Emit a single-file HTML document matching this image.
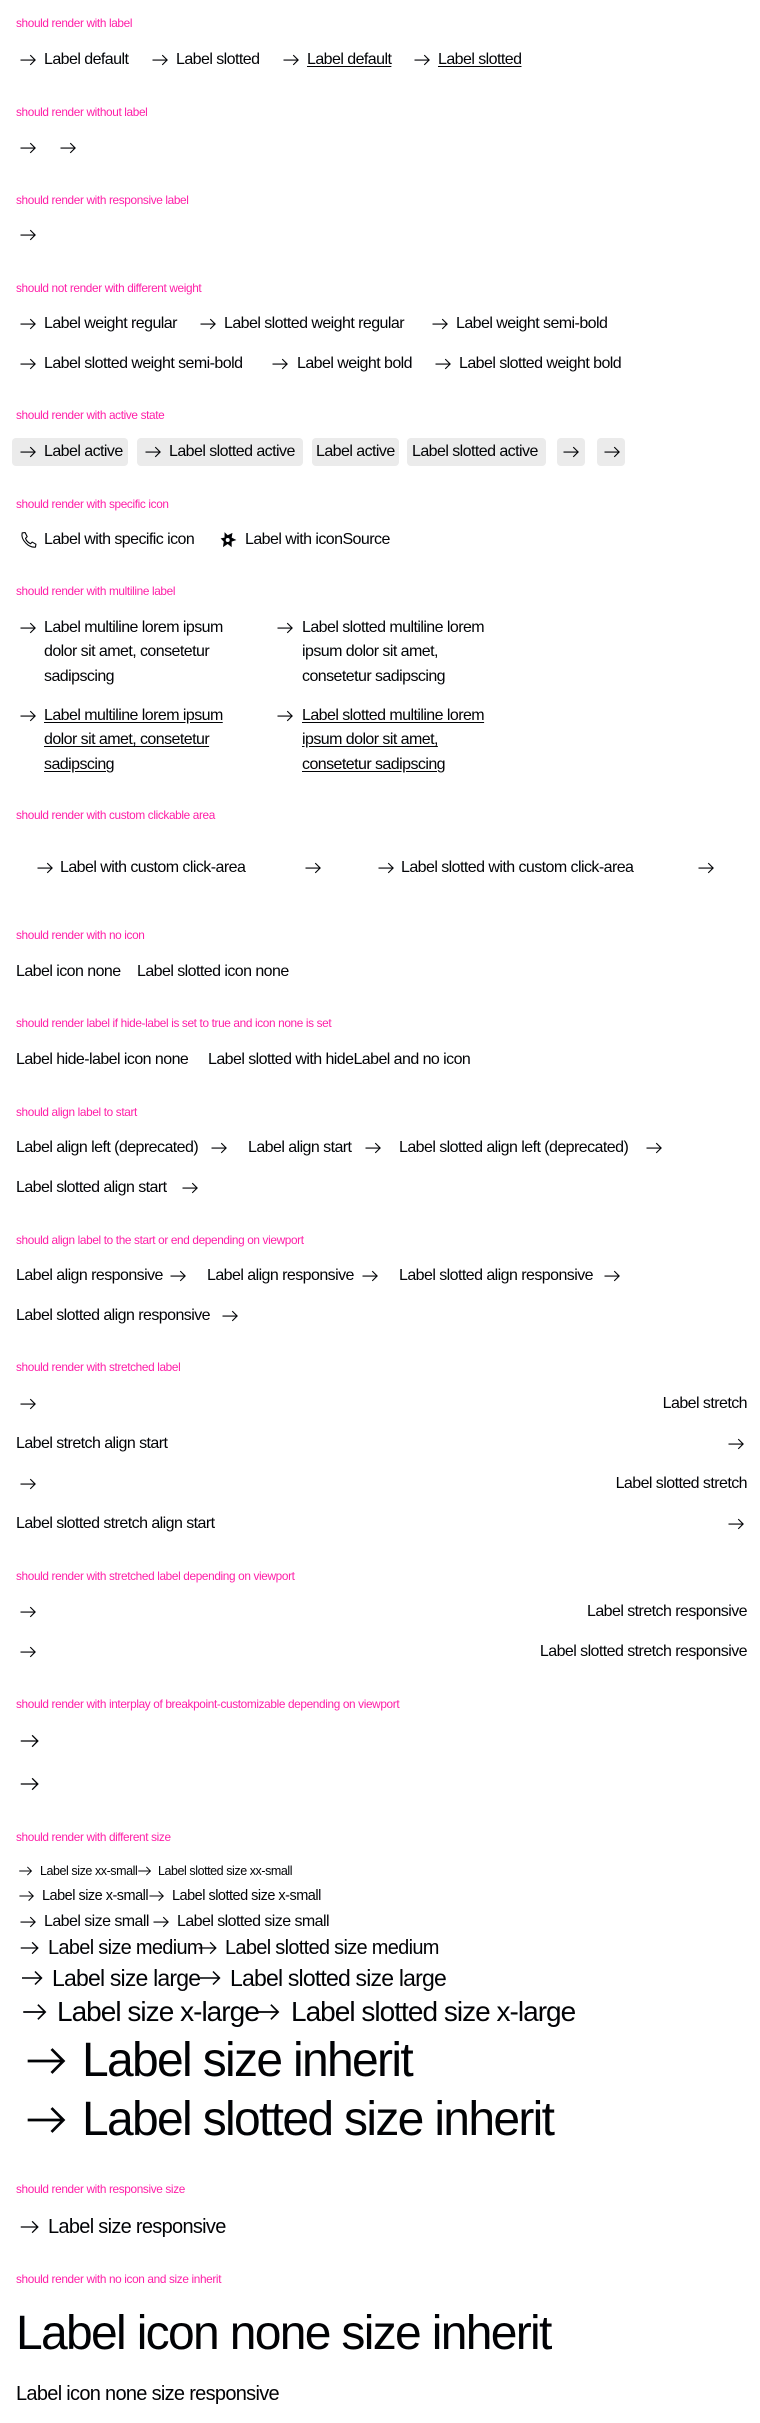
<!DOCTYPE html>
<html><head><meta charset="utf-8"><style>
html,body{margin:0;padding:0;background:#fff;}
body{position:relative;width:760px;height:2423px;overflow:hidden;font-family:"Liberation Sans",sans-serif;color:#010205;}
.h{position:absolute;left:16px;font-size:11.8px;line-height:14px;color:#ff1fa8;letter-spacing:-0.03em;transform:translateY(-50%);white-space:nowrap;}
.t{position:absolute;font-size:16px;line-height:24px;letter-spacing:-0.035em;transform:translateY(-50%);white-space:nowrap;}
.u{text-decoration:underline;text-underline-offset:2px;}
.a{position:absolute;width:18px;height:18px;transform:translateY(-50%);}
.b{position:absolute;top:438px;height:28px;background:#ebebeb;border-radius:4px;}
.r{right:13px;}
</style></head><body>
<svg width="0" height="0" style="position:absolute"><defs><symbol id="ar" viewBox="0 0 24 24"><path d="M2 12H21.5M15 5.5L21.5 12L15 18.5" fill="none" stroke="#010205" stroke-width="1.5"/></symbol></defs></svg>

<div class="h" style="top:23px">should render with label</div>
<svg class="a" style="left:19px;top:60px"><use href="#ar"/></svg><div class="t" style="left:44px;top:60px">Label default</div>
<svg class="a" style="left:151px;top:60px"><use href="#ar"/></svg><div class="t" style="left:176px;top:60px">Label slotted</div>
<svg class="a" style="left:282px;top:60px"><use href="#ar"/></svg><div class="t u" style="left:307px;top:60px">Label default</div>
<svg class="a" style="left:413px;top:60px"><use href="#ar"/></svg><div class="t u" style="left:438px;top:60px">Label slotted</div>

<div class="h" style="top:112px">should render without label</div>
<svg class="a" style="left:19px;top:148px"><use href="#ar"/></svg>
<svg class="a" style="left:59px;top:148px"><use href="#ar"/></svg>

<div class="h" style="top:200px">should render with responsive label</div>
<svg class="a" style="left:19px;top:235px"><use href="#ar"/></svg>

<div class="h" style="top:288px">should not render with different weight</div>
<svg class="a" style="left:19px;top:324px"><use href="#ar"/></svg><div class="t" style="left:44px;top:324px">Label weight regular</div>
<svg class="a" style="left:199px;top:324px"><use href="#ar"/></svg><div class="t" style="left:224px;top:324px">Label slotted weight regular</div>
<svg class="a" style="left:431px;top:324px"><use href="#ar"/></svg><div class="t" style="left:456px;top:324px">Label weight semi-bold</div>
<svg class="a" style="left:19px;top:364px"><use href="#ar"/></svg><div class="t" style="left:44px;top:364px">Label slotted weight semi-bold</div>
<svg class="a" style="left:271px;top:364px"><use href="#ar"/></svg><div class="t" style="left:297px;top:364px">Label weight bold</div>
<svg class="a" style="left:434px;top:364px"><use href="#ar"/></svg><div class="t" style="left:459px;top:364px">Label slotted weight bold</div>

<div class="h" style="top:415px">should render with active state</div>
<div class="b" style="left:12px;width:116px"></div>
<div class="b" style="left:137px;width:166px"></div>
<div class="b" style="left:312px;width:87px"></div>
<div class="b" style="left:407px;width:139px"></div>
<div class="b" style="left:557px;width:28px"></div>
<div class="b" style="left:597px;width:28px"></div>
<svg class="a" style="left:19px;top:452px"><use href="#ar"/></svg><div class="t" style="left:44px;top:452px">Label active</div>
<svg class="a" style="left:144px;top:452px"><use href="#ar"/></svg><div class="t" style="left:169px;top:452px">Label slotted active</div>
<div class="t" style="left:316px;top:452px">Label active</div>
<div class="t" style="left:412px;top:452px">Label slotted active</div>
<svg class="a" style="left:562px;top:452px"><use href="#ar"/></svg>
<svg class="a" style="left:603px;top:452px"><use href="#ar"/></svg>

<div class="h" style="top:504px">should render with specific icon</div>
<svg class="a" style="left:18px;top:540px;width:20px;height:20px" viewBox="0 0 24 24"><path d="M5 3.5L8.5 3L11 8L9 10C10 13 12 15 15 16.5L17 14.5L21.5 17L21 20.5C13 21.5 3 12 5 3.5Z" fill="none" stroke="#010205" stroke-width="1.3" stroke-linejoin="round"/></svg>
<div class="t" style="left:44px;top:540px">Label with specific icon</div>
<svg class="a" style="left:219px;top:540px;width:19px;height:19px" viewBox="0 0 24 24"><path d="M7 2L11 6L17 3L16 9L22 12L16 14L16 21L11 17L5 21L6 14L2 10L7 9Z" fill="#010205"/><circle cx="11" cy="12" r="2.5" fill="#fff"/></svg>
<div class="t" style="left:245px;top:540px">Label with iconSource</div>

<div class="h" style="top:591px">should render with multiline label</div>
<svg class="a" style="left:19px;top:628px"><use href="#ar"/></svg>
<div class="t" style="left:44px;top:628px">Label multiline lorem ipsum</div>
<div class="t" style="left:44px;top:652px">dolor sit amet, consetetur</div>
<div class="t" style="left:44px;top:677px">sadipscing</div>
<svg class="a" style="left:276px;top:628px"><use href="#ar"/></svg>
<div class="t" style="left:302px;top:628px">Label slotted multiline lorem</div>
<div class="t" style="left:302px;top:652px">ipsum dolor sit amet,</div>
<div class="t" style="left:302px;top:677px">consetetur sadipscing</div>
<svg class="a" style="left:19px;top:716px"><use href="#ar"/></svg>
<div class="t u" style="left:44px;top:716px">Label multiline lorem ipsum</div>
<div class="t u" style="left:44px;top:740px">dolor sit amet, consetetur</div>
<div class="t u" style="left:44px;top:765px">sadipscing</div>
<svg class="a" style="left:276px;top:716px"><use href="#ar"/></svg>
<div class="t u" style="left:302px;top:716px">Label slotted multiline lorem</div>
<div class="t u" style="left:302px;top:740px">ipsum dolor sit amet,</div>
<div class="t u" style="left:302px;top:765px">consetetur sadipscing</div>

<div class="h" style="top:815px">should render with custom clickable area</div>
<svg class="a" style="left:36px;top:868px"><use href="#ar"/></svg><div class="t" style="left:60px;top:868px">Label with custom click-area</div>
<svg class="a" style="left:304px;top:868px"><use href="#ar"/></svg>
<svg class="a" style="left:377px;top:868px"><use href="#ar"/></svg><div class="t" style="left:401px;top:868px">Label slotted with custom click-area</div>
<svg class="a" style="left:697px;top:868px"><use href="#ar"/></svg>

<div class="h" style="top:935px">should render with no icon</div>
<div class="t" style="left:16px;top:972px">Label icon none</div>
<div class="t" style="left:137px;top:972px">Label slotted icon none</div>

<div class="h" style="top:1023px">should render label if hide-label is set to true and icon none is set</div>
<div class="t" style="left:16px;top:1060px">Label hide-label icon none</div>
<div class="t" style="left:208px;top:1060px">Label slotted with hideLabel and no icon</div>

<div class="h" style="top:1112px">should align label to start</div>
<div class="t" style="left:16px;top:1148px">Label align left (deprecated)</div><svg class="a" style="left:210px;top:1148px"><use href="#ar"/></svg>
<div class="t" style="left:248px;top:1148px">Label align start</div><svg class="a" style="left:364px;top:1148px"><use href="#ar"/></svg>
<div class="t" style="left:399px;top:1148px">Label slotted align left (deprecated)</div><svg class="a" style="left:645px;top:1148px"><use href="#ar"/></svg>
<div class="t" style="left:16px;top:1188px">Label slotted align start</div><svg class="a" style="left:181px;top:1188px"><use href="#ar"/></svg>

<div class="h" style="top:1240px">should align label to the start or end depending on viewport</div>
<div class="t" style="left:16px;top:1276px">Label align responsive</div><svg class="a" style="left:169px;top:1276px"><use href="#ar"/></svg>
<div class="t" style="left:207px;top:1276px">Label align responsive</div><svg class="a" style="left:361px;top:1276px"><use href="#ar"/></svg>
<div class="t" style="left:399px;top:1276px">Label slotted align responsive</div><svg class="a" style="left:603px;top:1276px"><use href="#ar"/></svg>
<div class="t" style="left:16px;top:1316px">Label slotted align responsive</div><svg class="a" style="left:221px;top:1316px"><use href="#ar"/></svg>

<div class="h" style="top:1367px">should render with stretched label</div>
<svg class="a" style="left:19px;top:1404px"><use href="#ar"/></svg><div class="t r" style="top:1404px">Label stretch</div>
<div class="t" style="left:16px;top:1444px">Label stretch align start</div><svg class="a" style="left:727px;top:1444px"><use href="#ar"/></svg>
<svg class="a" style="left:19px;top:1484px"><use href="#ar"/></svg><div class="t r" style="top:1484px">Label slotted stretch</div>
<div class="t" style="left:16px;top:1524px">Label slotted stretch align start</div><svg class="a" style="left:727px;top:1524px"><use href="#ar"/></svg>

<div class="h" style="top:1576px">should render with stretched label depending on viewport</div>
<svg class="a" style="left:19px;top:1612px"><use href="#ar"/></svg><div class="t r" style="top:1612px">Label stretch responsive</div>
<svg class="a" style="left:19px;top:1652px"><use href="#ar"/></svg><div class="t r" style="top:1652px">Label slotted stretch responsive</div>

<div class="h" style="top:1704px">should render with interplay of breakpoint-customizable depending on viewport</div>
<svg class="a" style="left:19px;top:1741px;width:21px;height:21px"><use href="#ar"/></svg>
<svg class="a" style="left:19px;top:1784px;width:21px;height:21px"><use href="#ar"/></svg>

<div class="h" style="top:1837px">should render with different size</div>
<svg class="a" style="left:18px;top:1871px;width:15px;height:15px"><use href="#ar"/></svg><div class="t" style="left:40px;top:1871px;font-size:12.5px;line-height:18px">Label size xx-small</div>
<svg class="a" style="left:137px;top:1871px;width:15px;height:15px"><use href="#ar"/></svg><div class="t" style="left:158px;top:1871px;font-size:12.5px;line-height:18px">Label slotted size xx-small</div>
<svg class="a" style="left:18px;top:1896px;width:17px;height:17px"><use href="#ar"/></svg><div class="t" style="left:42px;top:1896px;font-size:14.5px">Label size x-small</div>
<svg class="a" style="left:148px;top:1896px;width:17px;height:17px"><use href="#ar"/></svg><div class="t" style="left:172px;top:1896px;font-size:14.5px">Label slotted size x-small</div>
<svg class="a" style="left:19px;top:1922px"><use href="#ar"/></svg><div class="t" style="left:44px;top:1922px">Label size small</div>
<svg class="a" style="left:152px;top:1922px"><use href="#ar"/></svg><div class="t" style="left:177px;top:1922px">Label slotted size small</div>
<svg class="a" style="left:19px;top:1948px;width:21px;height:21px"><use href="#ar"/></svg><div class="t" style="left:48px;top:1948px;font-size:20px;line-height:28px">Label size medium</div>
<svg class="a" style="left:197px;top:1948px;width:21px;height:21px"><use href="#ar"/></svg><div class="t" style="left:225px;top:1948px;font-size:20px;line-height:28px">Label slotted size medium</div>
<svg class="a" style="left:20px;top:1978px;width:24px;height:24px"><use href="#ar"/></svg><div class="t" style="left:52px;top:1978px;font-size:23px;line-height:32px">Label size large</div>
<svg class="a" style="left:198px;top:1978px;width:24px;height:24px"><use href="#ar"/></svg><div class="t" style="left:230px;top:1978px;font-size:23px;line-height:32px">Label slotted size large</div>
<svg class="a" style="left:21px;top:2012px;width:27px;height:27px"><use href="#ar"/></svg><div class="t" style="left:57px;top:2012px;font-size:28px;line-height:36px">Label size x-large</div>
<svg class="a" style="left:254px;top:2012px;width:27px;height:27px"><use href="#ar"/></svg><div class="t" style="left:291px;top:2012px;font-size:28px;line-height:36px">Label slotted size x-large</div>
<svg class="a" style="left:24px;top:2061px;width:44px;height:44px"><use href="#ar"/></svg><div class="t" style="left:82px;top:2061px;font-size:48px;line-height:58px">Label size inherit</div>
<svg class="a" style="left:24px;top:2120px;width:44px;height:44px"><use href="#ar"/></svg><div class="t" style="left:82px;top:2120px;font-size:48px;line-height:58px">Label slotted size inherit</div>

<div class="h" style="top:2189px">should render with responsive size</div>
<svg class="a" style="left:19px;top:2227px;width:21px;height:21px"><use href="#ar"/></svg><div class="t" style="left:48px;top:2227px;font-size:20px;line-height:28px">Label size responsive</div>

<div class="h" style="top:2279px">should render with no icon and size inherit</div>
<div class="t" style="left:16px;top:2334px;font-size:48px;line-height:58px">Label icon none size inherit</div>
<div class="t" style="left:16px;top:2394px;font-size:20px;line-height:28px">Label icon none size responsive</div>
</body></html>
